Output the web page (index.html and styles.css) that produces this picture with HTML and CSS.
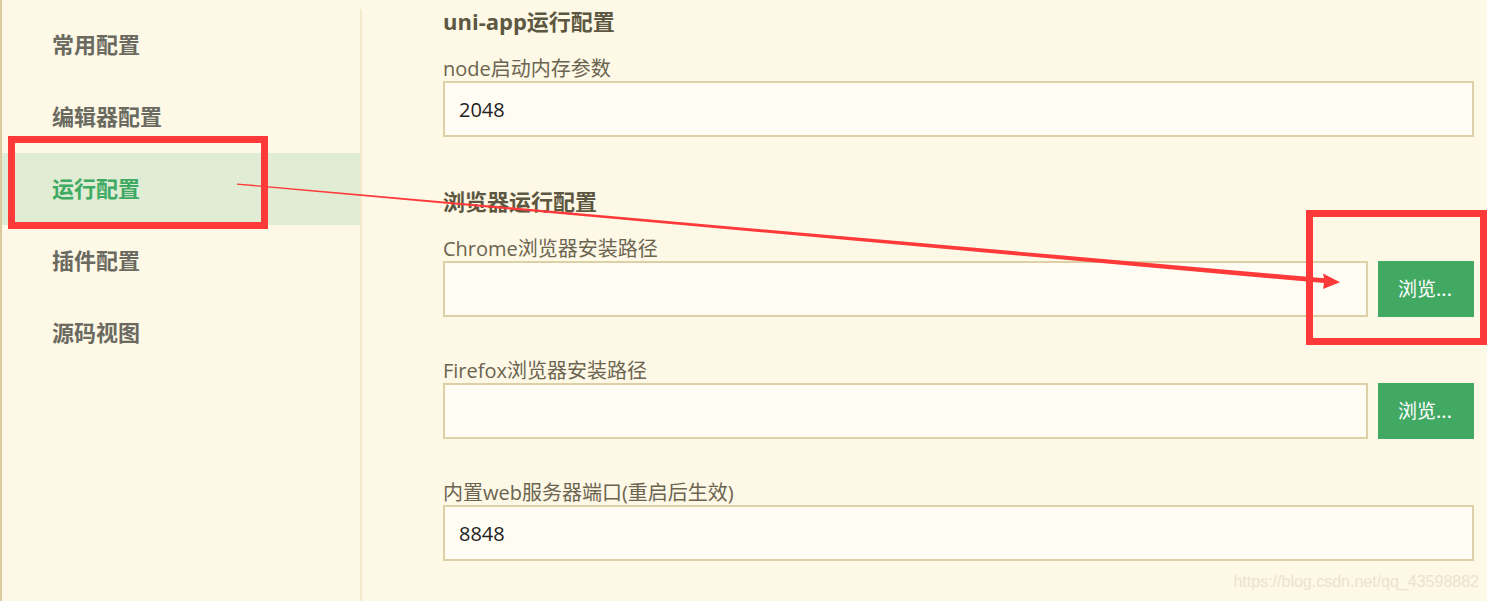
FILE: index.html
```html
<!DOCTYPE html>
<html lang="zh-CN">
<head>
<meta charset="utf-8">
<title>运行配置</title>
<link rel="stylesheet" href="styles.css">
</head>
<body>
<div class="app">
  <nav class="sidebar">
    <div class="nav-item">常用配置</div>
    <div class="nav-item">编辑器配置</div>
    <div class="nav-item active">运行配置</div>
    <div class="nav-item">插件配置</div>
    <div class="nav-item">源码视图</div>
  </nav>
  <main class="main">
    <section class="section">
      <h2 class="section-title">uni-app运行配置</h2>
      <div class="field">
        <label class="field-label">node启动内存参数</label>
        <div class="field-row"><div class="input">2048</div></div>
      </div>
    </section>
    <section class="section">
      <h2 class="section-title">浏览器运行配置</h2>
      <div class="field">
        <label class="field-label">Chrome浏览器安装路径</label>
        <div class="field-row"><div class="input"></div><button class="btn">浏览...</button></div>
      </div>
      <div class="field">
        <label class="field-label">Firefox浏览器安装路径</label>
        <div class="field-row"><div class="input"></div><button class="btn">浏览...</button></div>
      </div>
      <div class="field">
        <label class="field-label">内置web服务器端口(重启后生效)</label>
        <div class="field-row"><div class="input">8848</div></div>
      </div>
    </section>
  </main>
</div>
<svg class="annotations" width="1487" height="601" viewBox="0 0 1487 601" xmlns="http://www.w3.org/2000/svg">
  <rect x="11.5" y="139.5" width="253" height="86" fill="none" stroke="#fe3939" stroke-width="7"/>
  <rect x="1309.5" y="213.5" width="174" height="128" fill="none" stroke="#fe3939" stroke-width="7"/>
  <polygon fill="#fe3939" points="237,183.4 1324,278.3 1323,273.5 1340,282.3 1323,289 1324,283.1 237,184.8"/>
</svg>
<div class="watermark">https://blog.csdn.net/qq_43598882</div>
</body>
</html>
```

FILE: styles.css
```css
html, body {
  margin: 0;
  padding: 0;
}
body {
  background: #fef8e6;
  border-left: 2px solid #dccb9f;
  height: 601px;
  overflow: hidden;
  position: relative;
  font-family: "Open Sans", "Noto Sans CJK SC", sans-serif;
}
.app {
  display: flex;
  height: 601px;
}
.sidebar {
  margin-top: 9px;
  width: 358px;
  flex: none;
  border-right: 2px solid #f3e9cd;
}
.nav-item {
  height: 72px;
  box-sizing: border-box;
  padding-bottom: 4px;
  display: flex;
  align-items: center;
  padding-left: 50px;
  font-family: "Noto Sans CJK SC", sans-serif;
  font-size: 22px;
  font-weight: 700;
  color: #6a6a60;
}
.nav-item.active {
  background: #e0ecd3;
  color: #3faa64;
}
.main {
  flex: 1;
  display: flex;
  flex-direction: column;
  gap: 10px;
  padding: 9px 13px 0 81px;
}
.section {
  display: flex;
  flex-direction: column;
}
.section-title {
  margin: 0 0 24px;
  font-size: 22px;
  line-height: 24px;
  font-weight: 700;
  color: #5c5741;
}
.field {
  margin-bottom: 42px;
}
.field-label {
  display: block;
  font-size: 20px;
  line-height: 24px;
  color: #6b6450;
}
.field-row {
  display: flex;
  gap: 10px;
}
.input {
  flex: 1;
  height: 56px;
  box-sizing: border-box;
  border: 2px solid #ddd0a7;
  background: #fffcf3;
  padding-left: 14px;
  display: flex;
  align-items: center;
  font-size: 20px;
  color: #222222;
}
.btn {
  width: 96px;
  height: 56px;
  flex: none;
  border: none;
  background: #42a963;
  color: #ffffff;
  font-family: "Noto Sans CJK SC", sans-serif;
  font-size: 19px;
  padding: 0 2px 3px 0;
}
.annotations {
  position: absolute;
  top: 0;
  left: -2px;
  pointer-events: none;
}
.watermark {
  position: absolute;
  right: 8px;
  top: 572px;
  font-family: "Liberation Sans", Arial, sans-serif;
  font-size: 16px;
  line-height: 20px;
  color: #ebe3cf;
}
```
